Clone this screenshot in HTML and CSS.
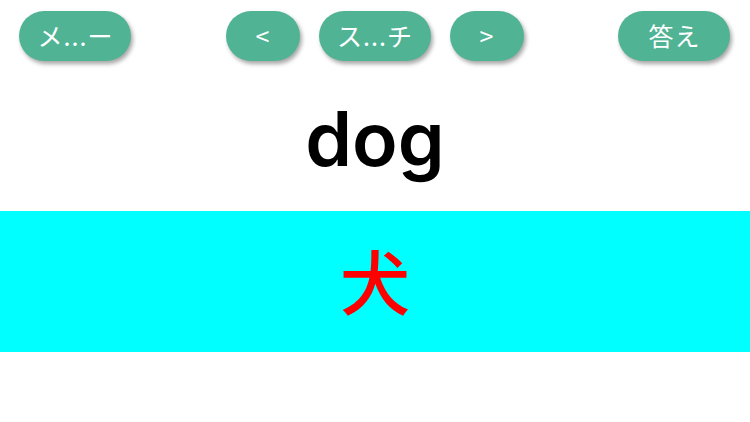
FILE: index.html
```html
<!DOCTYPE html>
<html lang="ja">
<head>
<meta charset="utf-8">
<link rel="stylesheet" href="styles.css">
</head>
<body>
<div class="app">
  <div class="toolbar">
    <button class="btn wide">メ...ー</button>
    <div class="center">
      <button class="btn narrow">&lt;</button>
      <button class="btn wide">ス...チ</button>
      <button class="btn narrow">&gt;</button>
    </div>
    <button class="btn wide">答え</button>
  </div>
  <div class="word">dog</div>
  <div class="answer"><span>犬</span></div>
</div>
</body>
</html>
```
FILE: styles.css
```css
html, body {
  margin: 0;
  padding: 0;
  background: #ffffff;
}
.app {
  width: 750px;
  height: 422px;
  overflow: hidden;
  font-family: "Inter", "Noto Sans CJK JP", sans-serif;
}
.toolbar {
  display: flex;
  justify-content: space-between;
  align-items: center;
  padding: 10px 20px 0 19px;
  height: 51px;
}
.center {
  display: flex;
  gap: 19px;
}
.btn {
  height: 50px;
  border: none;
  border-radius: 25px;
  background: #4fb394;
  color: #ffffff;
  font-family: "Noto Sans CJK JP", sans-serif;
  font-size: 25px;
  font-weight: 400;
  letter-spacing: 1px;
  padding: 0 0 2px 1px;
  box-shadow: 2px 3px 4px rgba(0, 0, 0, 0.35);
  display: flex;
  align-items: center;
  justify-content: center;
}
.wide { width: 112px; }
.narrow { width: 74px; }
.word {
  height: 150px;
  display: flex;
  align-items: center;
  justify-content: center;
  font-family: "Inter", sans-serif;
  font-size: 75px;
  font-weight: 600;
  color: #000000;
  padding-top: 4px;
  box-sizing: border-box;
}
.answer {
  height: 141px;
  background: #00ffff;
  display: flex;
  align-items: center;
  justify-content: center;
}
.answer span {
  font-family: "Noto Sans CJK JP", sans-serif;
  font-size: 70px;
  font-weight: 500;
  color: #ff0000;
  line-height: 1;
  padding-bottom: 4px;
}
```
